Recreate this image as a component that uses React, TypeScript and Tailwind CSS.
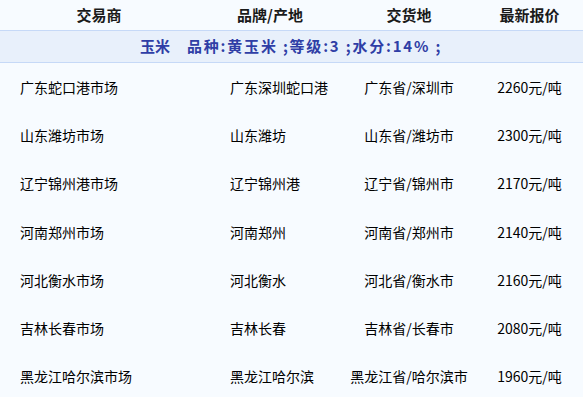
import React from "react";

const rows = [
  ["广东蛇口港市场", "广东深圳蛇口港", "广东省/深圳市", "2260元/吨"],
  ["山东潍坊市场", "山东潍坊", "山东省/潍坊市", "2300元/吨"],
  ["辽宁锦州港市场", "辽宁锦州港", "辽宁省/锦州市", "2170元/吨"],
  ["河南郑州市场", "河南郑州", "河南省/郑州市", "2140元/吨"],
  ["河北衡水市场", "河北衡水", "河北省/衡水市", "2160元/吨"],
  ["吉林长春市场", "吉林长春", "吉林省/长春市", "2080元/吨"],
  ["黑龙江哈尔滨市场", "黑龙江哈尔滨", "黑龙江省/哈尔滨市", "1960元/吨"],
];

export default function App() {
  return (
    <div
      className="w-[583px] h-[397px] overflow-hidden bg-[#f7fbff] text-[#111]"
      style={{ fontFamily: '"Noto Sans CJK SC", "Noto Sans", sans-serif' }}
    >
      <div className="grid grid-cols-[198px_144px_134px_107px] h-[30px] items-center text-[15px] font-bold text-[#1a1a1a]">
        <div className="text-center">交易商</div>
        <div className="text-center">品牌/产地</div>
        <div className="text-center">交货地</div>
        <div className="text-center">最新报价</div>
      </div>
      <div className="h-[33px] border-y border-[#c6d9f7] bg-[#e8f0fb] flex items-center pl-[140px] text-[15px] font-bold text-[#2f3ea6] whitespace-pre">
        <span>玉米</span>
        <span className="ml-[17px] tracking-[1.8px]">品种:黄玉米 ;等级:3 ;水分:14% ;</span>
      </div>
      {rows.map((r, i) => (
        <div
          key={i}
          className="grid grid-cols-[198px_144px_134px_107px] h-[48.3px] items-center text-[14px] text-black"
        >
          <div className="pl-5 whitespace-nowrap">{r[0]}</div>
          <div className="pl-8 whitespace-nowrap">{r[1]}</div>
          <div className="text-center whitespace-nowrap">{r[2]}</div>
          <div className="text-center whitespace-nowrap">{r[3]}</div>
        </div>
      ))}
    </div>
  );
}
